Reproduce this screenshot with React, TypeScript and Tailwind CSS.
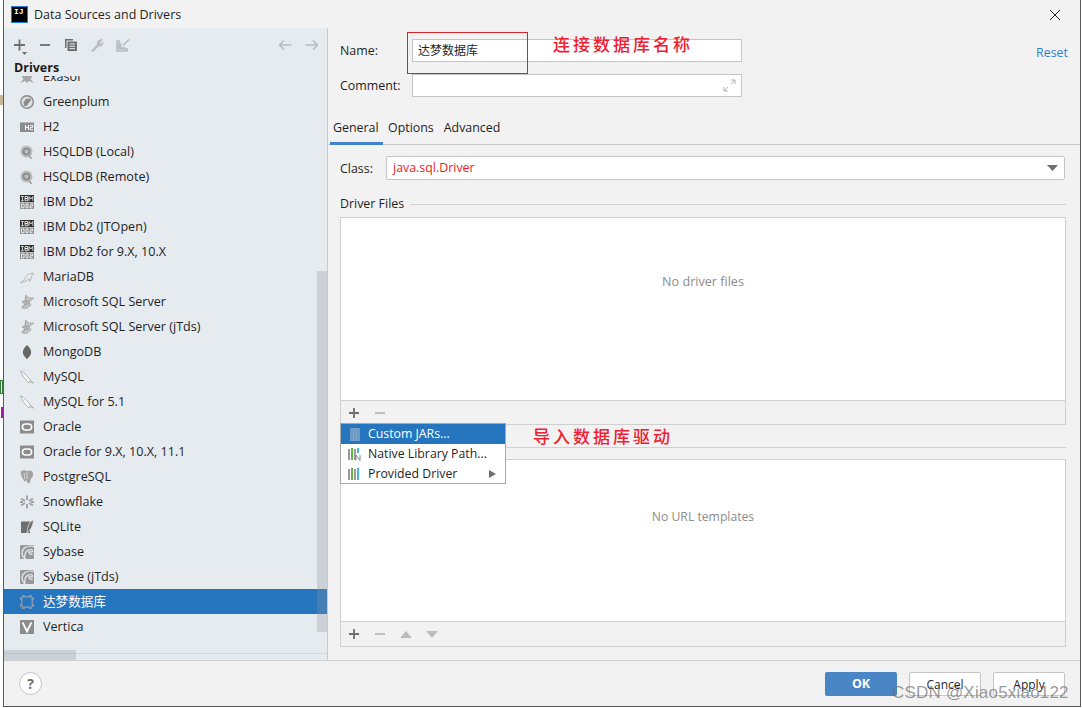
import React from "react";

const uiFont = "font-['Open_Sans','Noto_Sans_CJK_SC',sans-serif]";

function Svg({ size = 14, children, className = "" }: { size?: number; children: React.ReactNode; className?: string }) {
  return (
    <svg width={size} height={size} viewBox="0 0 14 14" className={"shrink-0 " + className}>
      {children}
    </svg>
  );
}

const G = "#8c8c8c";

const icons: Record<string, React.ReactNode> = {
  exasol: <path d="M0 4 L4 6 L7 3.5 L10 6 L14 4 L10.5 9 L14 13 L9 11 L7 13 L5 11 L0 13 L3.5 9 Z" fill="#a8a8a8" />,
  greenplum: (
    <>
      <circle cx="7" cy="7" r="6.3" fill="#dcdfe2" stroke={G} strokeWidth="1.4" />
      <path d="M3.8 10.5 C2.8 5.5 6.5 2.5 10.8 3.8 C11 7 8.5 7 7.8 9.5 C6.8 11.2 5 11.4 3.8 10.5 Z" fill={G} />
    </>
  ),
  h2: (
    <>
      <rect x="0" y="2.5" width="14" height="9.5" fill={G} />
      <path d="M5.5 5 V10 M8.5 5 V10 M5.5 7.4 H8.5" stroke="#fff" strokeWidth="1" fill="none" />
      <path d="M9.8 5.3 H12.7 V7.4 H10.2 V9.6 H13" stroke="#fff" strokeWidth="0.9" fill="none" />
    </>
  ),
  hsql: (
    <>
      <circle cx="6.5" cy="6.5" r="6" fill="#bcbcbc" />
      <circle cx="6.5" cy="6.5" r="3" fill="none" stroke="#858585" strokeWidth="1.6" />
      <path d="M9 10.5 L11.5 14" stroke="#999" strokeWidth="1.4" />
    </>
  ),
  ibm: (
    <>
      <rect x="0" y="0" width="14" height="7" fill="#2f2f2f" />
      <rect x="0" y="7.5" width="14" height="6.5" fill="#8c8c8c" />
      <path d="M1 1.5 H3.8 M2.4 1.5 V5.8 M1 5.8 H3.8 M5 1.5 V5.8 M5 1.5 H7.6 V3.6 H5 M5 3.6 H7.8 V5.8 H5 M9 5.8 V1.5 L10.8 4 L12.8 1.5 V5.8" stroke="#fff" strokeWidth="0.8" fill="none" />
      <path d="M1.5 9 V12.8 H4 V9 Z M6 9 V12.8 H8 V9 Z M10 9 H12.6 V10.8 H10 V12.8 H12.6" stroke="#fff" strokeWidth="0.8" fill="none" />
    </>
  ),
  maria: (
    <path d="M0.5 12.5 C3 11 5 10 6 7 C7.5 4 10 3.5 13.5 3 L12 5 C11.5 7 11 10 9.5 11.5 L9 8.5 C7 11 4 12 0.5 12.5 Z" fill="#ededed" stroke="#a5a5a5" strokeWidth="0.7" />
  ),
  mssql: (
    <>
      <path d="M5.5 0 L9 3 L13.5 3 L9 7 L11 10 L6 14 L1.5 12.5 L5 9 L2 7 L5.5 5 Z" fill="#c4c4c4" stroke="#9a9a9a" strokeWidth="0.7" />
      <path d="M2.5 11.5 L9 8 M3.5 7 L9.5 6 M5 2.5 L7 9.5" stroke="#8a8a8a" strokeWidth="0.6" />
    </>
  ),
  mongo: <path d="M7 0 C10.5 3 11.5 6 11 8.5 C10.5 11 8 12.5 7.4 14 H6.6 C6 12.5 3.5 11 3 8.5 C2.5 6 3.5 3 7 0 Z" fill="#666" />,
  mysql: (
    <path d="M0.5 1 C3 1.5 4.5 3 5.5 5 C7 5.5 9 8 10 10 L13.5 13 L9.5 11.5 L9 13 C7.5 11 5 9.5 3.5 7 C2.5 5 1.5 3 0.5 1 Z" fill="#fbfbfb" stroke="#a0a0a0" strokeWidth="0.8" />
  ),
  oracle: (
    <>
      <rect x="0" y="0.5" width="14" height="13" fill={G} />
      <rect x="2.4" y="4" width="9.2" height="6" rx="3" fill="none" stroke="#fff" strokeWidth="1.6" />
    </>
  ),
  postgres: (
    <>
      <path d="M1 1 C4 -0.5 6 0.5 7 1.2 C8.5 0 12.5 0 13 3 C13.5 6 12 8 11 8.5 C10.5 10 10.5 12.5 8.8 13.5 C7 13.5 7 10.5 6.5 10 C5.5 11.5 4 12 3.2 9.5 C2 7 0 4 1 1 Z" fill="#a2a2a2" />
      <path d="M7 2 V9 M4 3 C4 5 5 7 5 9" stroke="#e6ebf0" strokeWidth="0.7" fill="none" />
    </>
  ),
  snowflake: (
    <>
      <path d="M7 0.5 V5 M7 9 V13.5 M1 3.5 L5 6 M9 8 L13 10.5 M1 10.5 L5 8 M9 6 L13 3.5" stroke="#a0a0a0" strokeWidth="1.8" fill="none" />
      <path d="M0 7 H3 M11 7 H14" stroke="#a0a0a0" strokeWidth="1.8" />
    </>
  ),
  sqlite: (
    <>
      <path d="M1 1.5 H10 V13 H1 Z" fill="#6f6f6f" />
      <path d="M13.5 0 C9.5 1 7.5 6 7 13 C10.5 10.5 13 6 13.5 0 Z" fill="#6f6f6f" stroke="#e6ebf0" strokeWidth="0.7" />
    </>
  ),
  sybase: (
    <>
      <rect x="0" y="0" width="14" height="14" rx="1" fill="#999" />
      <path d="M14 1.5 C6 -0.5 2 4 2 8 C2 10.5 3 12.5 5 14 C4 9 6 4.5 11 4.5 C12.5 4.5 13 6.5 11.5 7 C10.5 7.2 9.7 6.5 9.2 6.5 C8.8 9 11 10 12.5 9" fill="none" stroke="#e6ebf0" strokeWidth="1.2" />
    </>
  ),
  dm: (
    <path d="M0 2 H2 V0 H5 V1 H9 V0 H12 V2 H14 V5 H13 V9 H14 V12 H12 V14 H9 V13 H5 V14 H2 V12 H0 V9 H1 V5 H0 Z M2.5 2.5 V11.5 H11.5 V2.5 Z" fill="#8496a9" fillRule="evenodd" />
  ),
  vertica: (
    <>
      <rect x="0" y="0" width="14" height="14" fill={G} />
      <path d="M2.6 2.5 L7 11.5 L11.4 2.5" fill="none" stroke="#fff" strokeWidth="1.8" />
    </>
  ),
};

const drivers: [string, string][] = [
  ["Exasol", "exasol"],
  ["Greenplum", "greenplum"],
  ["H2", "h2"],
  ["HSQLDB (Local)", "hsql"],
  ["HSQLDB (Remote)", "hsql"],
  ["IBM Db2", "ibm"],
  ["IBM Db2 (JTOpen)", "ibm"],
  ["IBM Db2 for 9.X, 10.X", "ibm"],
  ["MariaDB", "maria"],
  ["Microsoft SQL Server", "mssql"],
  ["Microsoft SQL Server (jTds)", "mssql"],
  ["MongoDB", "mongo"],
  ["MySQL", "mysql"],
  ["MySQL for 5.1", "mysql"],
  ["Oracle", "oracle"],
  ["Oracle for 9.X, 10.X, 11.1", "oracle"],
  ["PostgreSQL", "postgres"],
  ["Snowflake", "snowflake"],
  ["SQLite", "sqlite"],
  ["Sybase", "sybase"],
  ["Sybase (jTds)", "sybase"],
  ["达梦数据库", "dm"],
  ["Vertica", "vertica"],
];

function Sidebar() {
  return (
    <aside className="relative w-[324px] shrink-0 bg-[#e6ebf0] border-r border-[#c9c9c9] flex flex-col overflow-hidden">
      <div className="h-[26px] mt-[4px] flex items-center pl-[10px] pr-[8px] shrink-0">
        <svg width="16" height="18" viewBox="0 0 16 18" className="mt-[3px]">
          <path d="M0 7 H11 M5.5 1.5 V12.5" stroke="#6e6e6e" strokeWidth="1.8" />
          <path d="M8 14 H13 L10.5 17 Z" fill="#6e6e6e" />
        </svg>
        <svg width="12" height="14" viewBox="0 0 12 14" className="ml-[9px]">
          <path d="M1 7 H11" stroke="#6e6e6e" strokeWidth="1.8" />
        </svg>
        <svg width="14" height="14" viewBox="0 0 14 14" className="ml-[13px]">
          <path d="M1 1 H9 V2.5 H2.5 V10 H1 Z" fill="#6e6e6e" />
          <path d="M3.5 3.5 H13 V13 H3.5 Z" fill="#6e6e6e" />
          <path d="M5.5 6 H11 M5.5 8.3 H11 M5.5 10.6 H11" stroke="#e6ebf0" strokeWidth="1" />
        </svg>
        <svg width="14" height="14" viewBox="0 0 14 14" className="ml-[12px]">
          <path d="M1 13 L7 6.5 C6.5 3.5 9 0.5 13 1.5 L10 4.5 L11 6 L13.5 3.5 C14 7 11 9 8.5 8.5 L3 14 Z" fill="#b9bcbf" />
        </svg>
        <svg width="14" height="14" viewBox="0 0 14 14" className="ml-[12px]">
          <path d="M1 3 V13 H11 V11 H3 V3 Z M13 1.5 L7 7.5 M4.5 5 V10 H9.5" fill="none" stroke="#b9bcbf" strokeWidth="1.6" />
        </svg>
        <svg width="14" height="12" viewBox="0 0 14 12" className="ml-auto">
          <path d="M13.5 6 H1.5 M6 1.5 L1.5 6 L6 10.5" fill="none" stroke="#b9bcbf" strokeWidth="1.5" />
        </svg>
        <svg width="14" height="12" viewBox="0 0 14 12" className="ml-[13px]">
          <path d="M0.5 6 H12.5 M8 1.5 L12.5 6 L8 10.5" fill="none" stroke="#b9bcbf" strokeWidth="1.5" />
        </svg>
      </div>
      <div className="h-[18px] pl-[10px] text-[12.5px] font-bold leading-[20px] text-[#1a1a1a] shrink-0">Drivers</div>
      <div className="flex-1 overflow-hidden">
        <ul className="mt-[-12px]">
          {drivers.map(([name, icon]) => {
            const selected = name === "达梦数据库";
            return (
              <li
                key={name}
                className={
                  "h-[25px] flex items-center gap-[9px] pl-[16px] text-[12.6px] " +
                  (selected ? "bg-[#2675bf] text-white" : "text-[#1f1f1f]")
                }
              >
                <Svg>{icons[icon]}</Svg>
                <span className="pt-[2px]">{name}</span>
              </li>
            );
          })}
        </ul>
      </div>
      <div className="absolute right-0 top-[243px] w-[10px] h-[361px] bg-[#8f969c]/30" />
      <div className="absolute left-0 right-0 bottom-[6px] h-px bg-[#d5d9dd]" />
      <div className="absolute left-0 bottom-0 w-[72px] h-[10px] bg-[#8f969c]/30" />
    </aside>
  );
}

function SmallPlus({ off = false }: { off?: boolean }) {
  return (
    <svg width="12" height="12" viewBox="0 0 12 12">
      {!off && <path d="M1 6 H11 M6 1 V11" stroke="#6e6e6e" strokeWidth="1.8" />}
      {off && <path d="M1 6 H11" stroke="#b9b9b9" strokeWidth="1.8" />}
    </svg>
  );
}

function Field({ label, width, children }: { label: string; width: string; children: React.ReactNode }) {
  return (
    <div className="flex items-center">
      <span className={"text-[12.4px] pt-[2px] text-[#1f1f1f] " + width}>{label}</span>
      {children}
    </div>
  );
}

function DetailForm() {
  return (
    <main className="relative flex-1 min-w-0 flex flex-col bg-[#f2f2f2]">
      <div className="pl-[12px] pt-[11px]">
        <Field label="Name:" width="w-[72px]">
          <div className="w-[330px] h-[23px] bg-white border border-[#c4c4c4] pl-[5px] text-[12px] leading-[22px] text-[#1f1f1f]">达梦数据库</div>
        </Field>
        <div className="mt-[12px]">
          <Field label="Comment:" width="w-[72px]">
            <div className="w-[330px] h-[23px] bg-white border border-[#c4c4c4] flex items-center justify-end pr-[5px]">
              <svg width="13" height="13" viewBox="0 0 13 13">
                <path d="M1 12 L5 8 M1 8 V12 H5 M12 1 L8 5 M8 1 H12 V5" fill="none" stroke="#b4b4b4" strokeWidth="1" />
              </svg>
            </div>
          </Field>
        </div>
      </div>
      <div className="absolute right-[12px] top-[16px] text-[12.4px] text-[#2f80cc]">Reset</div>
      <nav className="mt-[16px] h-[32px] flex pl-[2px] border-b border-[#c9c9c9] text-[12.4px] text-[#1f1f1f] shrink-0">
        <div className="w-[53px] h-[32px] pl-[3px] pt-[6px] border-b-[3px] border-[#3f84c8]">General</div>
        <div className="pl-[5px] pt-[6px]">Options</div>
        <div className="pl-[10px] pt-[6px]">Advanced</div>
      </nav>
      <div className="pl-[12px] pr-[14px] pt-[11px] flex-1 flex flex-col">
        <Field label="Class:" width="w-[46px]">
          <div className="flex-1 h-[24px] bg-white border border-[#c4c4c4] rounded-[2px] flex items-center justify-between pl-[6px] pr-[6px] text-[12.4px] text-[#f01c1c] mr-px">
            <span>java.sql.Driver</span>
            <svg width="11" height="7" viewBox="0 0 11 7"><path d="M0 0 H11 L5.5 6 Z" fill="#6e6e6e" /></svg>
          </div>
        </Field>
        <div className="mt-[15px] h-[18px] flex items-center gap-[6px] text-[12.4px] text-[#1f1f1f]">
          <span>Driver Files</span>
          <div className="flex-1 h-px bg-[#d0d0d0]" />
        </div>
        <div className="mt-[4px] h-[208px] border border-[#cfcfcf] flex flex-col">
          <div className="flex-1 bg-white flex items-center justify-center text-[12.6px] text-[#8c8c8c] pb-[54px]">No driver files</div>
          <div className="h-[24px] border-t border-[#cfcfcf] flex items-center gap-[14px] pl-[7px]">
            <SmallPlus />
            <SmallPlus off />
          </div>
        </div>
        <div className="mt-[13px] h-[18px] flex items-center gap-[6px] text-[12.4px] text-[#1f1f1f]">
          <span>URL Templates</span>
          <div className="flex-1 h-px bg-[#d0d0d0]" />
        </div>
        <div className="mt-[3px] h-[188px] border border-[#cfcfcf] flex flex-col">
          <div className="flex-1 bg-white flex items-center justify-center text-[12.2px] text-[#8c8c8c] pb-[47px]">No URL templates</div>
          <div className="h-[25px] border-t border-[#cfcfcf] flex items-center gap-[14px] pl-[7px]">
            <SmallPlus />
            <SmallPlus off />
            <svg width="12" height="7" viewBox="0 0 12 7"><path d="M0 7 H12 L6 0 Z" fill="#bcbcbc" /></svg>
            <svg width="12" height="7" viewBox="0 0 12 7"><path d="M0 0 H12 L6 7 Z" fill="#bcbcbc" /></svg>
          </div>
        </div>
      </div>
    </main>
  );
}

function BarsIcon({ n = false, stripe = false }: { n?: boolean; stripe?: boolean }) {
  if (stripe) {
    return (
      <svg width="12" height="14" viewBox="0 0 12 14" className="shrink-0">
        <rect x="1" y="1" width="10" height="13" fill="#6d9ac5" />
        <path d="M4.5 1 V14 M7.5 1 V14" stroke="#8fb3d6" strokeWidth="1" strokeDasharray="1 1" />
      </svg>
    );
  }
  return (
    <svg width="13" height="14" viewBox="0 0 13 14" className="shrink-0">
      <rect x="0" y="2" width="2" height="11" fill="#9a9a9a" />
      <rect x="3" y="1" width="2" height="12" fill="#62b543" />
      <rect x="6" y="2" width="2" height="11" fill="#9a9a9a" />
      <rect x="9" y="1" width="2" height={n ? 5 : 12} fill="#40b6e0" />
      {n && <path d="M8 13.5 V8 L12 13.5 V8" fill="none" stroke="#7d8b96" strokeWidth="1" />}
    </svg>
  );
}

function AddMenu() {
  return (
    <div className="absolute left-[340px] top-[423px] w-[166px] h-[61px] bg-white border border-[#a8a8a8] text-[12.3px] text-[#1f1f1f]">
      <div className="h-[20px] bg-[#2675bf] text-white flex items-center pl-[8px] gap-[7px]">
        <BarsIcon stripe />
        <span>Custom JARs...</span>
      </div>
      <div className="h-[20px] flex items-center pl-[7px] gap-[7px]">
        <BarsIcon n />
        <span>Native Library Path...</span>
      </div>
      <div className="h-[19px] flex items-center pl-[7px] gap-[7px]">
        <BarsIcon />
        <span className="pt-[2px]">Provided Driver</span>
        <svg width="7" height="8" viewBox="0 0 7 8" className="ml-auto mr-[9px]"><path d="M0 0 L7 4 L0 8 Z" fill="#6e6e6e" /></svg>
      </div>
    </div>
  );
}

export default function App() {
  return (
    <div className={"relative w-[1082px] h-[708px] overflow-hidden bg-white " + uiFont}>
      <div className="ml-[3px] mr-px h-[707px] border-l border-r border-b border-[#5a5a5a] bg-[#f2f2f2] flex flex-col">
        <header className="h-[28px] shrink-0 bg-[#f2f2f2] flex items-center pl-[7px] pr-[19px] pt-[1px]">
          <div className="w-[17px] h-[17px] bg-black border border-[#1e7fd8] text-white text-[8px] font-bold leading-[10px] pl-[2px] font-['Liberation_Mono',monospace]">
            IJ
          </div>
          <span className="ml-[6px] pt-[2px] text-[12.5px] text-[#1f1f1f]">Data Sources and Drivers</span>
          <svg width="12" height="12" viewBox="0 0 12 12" className="ml-auto">
            <path d="M1 1 L11 11 M11 1 L1 11" stroke="#222" strokeWidth="1" />
          </svg>
        </header>
        <div className="h-[632px] flex shrink-0">
          <Sidebar />
          <DetailForm />
        </div>
        <footer className="flex-1 border-t border-[#cfcfcf] flex items-center pl-[15px] pr-[15px]">
          <div className="w-[23px] h-[23px] rounded-full bg-white border border-[#c4c4c4] flex items-center justify-center text-[14px] font-bold text-[#6e6e6e]">?</div>
          <button className="ml-auto w-[72px] h-[24px] pt-[1px] rounded-[2px] bg-[#4a86c5] text-white text-[12.5px] font-bold">OK</button>
          <button className="ml-[12px] w-[72px] h-[24px] pt-[2px] rounded-[2px] bg-white border border-[#c4c4c4] text-[12px] text-[#1f1f1f]">Cancel</button>
          <button className="ml-[12px] w-[72px] h-[24px] pt-[2px] rounded-[2px] bg-white border border-[#c4c4c4] text-[12px] text-[#1f1f1f]">Apply</button>
        </footer>
      </div>

      <AddMenu />

      <div className="absolute left-[1px] top-[407px] w-[2px] h-[11px] bg-[#a020a0]" />
      <div className="absolute left-0 top-[95px] w-[3px] h-[10px] bg-[#c8b89a]" />
      <div className="absolute left-0 top-[380px] w-[3px] h-[14px] border border-[#2e7d32]" />

      <div className="absolute left-[407px] top-[32px] w-[121px] h-[42px] border border-[#d9222a]" />
      <div className="absolute left-[553px] top-[31px] text-[17px] font-medium tracking-[3px] text-[#ee2030] font-['Noto_Sans_CJK_SC',sans-serif]">连接数据库名称</div>
      <div className="absolute left-[533px] top-[423px] text-[17px] font-medium tracking-[3px] text-[#ee2030] font-['Noto_Sans_CJK_SC',sans-serif]">导入数据库驱动</div>
      <div className="absolute left-[892px] top-[680px] text-[17px] tracking-[0.2px] text-[#6e6e6e]/70 font-['Liberation_Sans',sans-serif]">CSDN @Xiao5xiao122</div>
    </div>
  );
}
